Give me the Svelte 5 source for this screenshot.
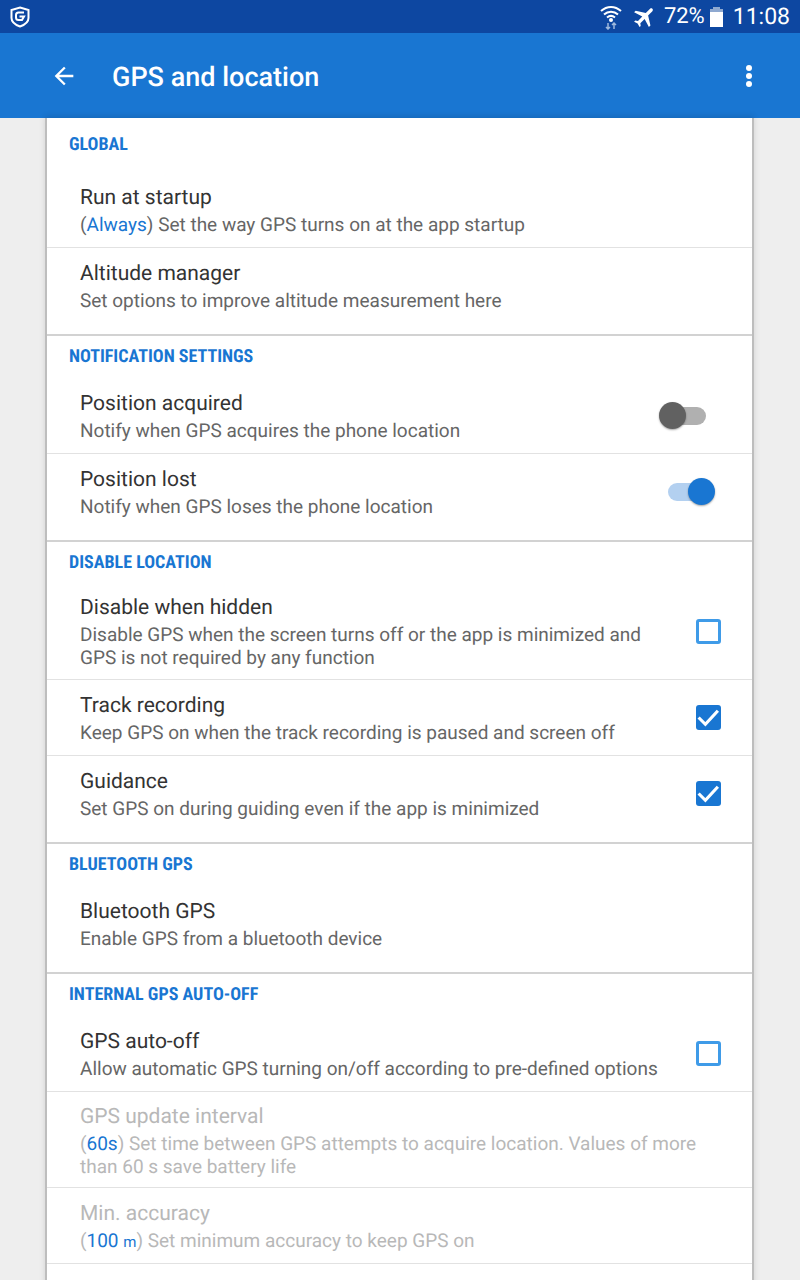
<script>
  const sections = [
    {
      title: 'GLOBAL',
      rows: [
        { title: 'Run at startup', value: 'Always', sub: 'Set the way GPS turns on at the app startup' },
        { title: 'Altitude manager', sub: 'Set options to improve altitude measurement here' }
      ]
    },
    {
      title: 'NOTIFICATION SETTINGS',
      rows: [
        { title: 'Position acquired', sub: 'Notify when GPS acquires the phone location', toggle: false },
        { title: 'Position lost', sub: 'Notify when GPS loses the phone location', toggle: true }
      ]
    },
    {
      title: 'DISABLE LOCATION',
      rows: [
        { title: 'Disable when hidden', sub: 'Disable GPS when the screen turns off or the app is minimized and GPS is not required by any function', check: false },
        { title: 'Track recording', sub: 'Keep GPS on when the track recording is paused and screen off', check: true },
        { title: 'Guidance', sub: 'Set GPS on during guiding even if the app is minimized', check: true }
      ]
    },
    {
      title: 'BLUETOOTH GPS',
      rows: [{ title: 'Bluetooth GPS', sub: 'Enable GPS from a bluetooth device' }]
    },
    {
      title: 'INTERNAL GPS AUTO-OFF',
      rows: [
        { title: 'GPS auto-off', sub: 'Allow automatic GPS turning on/off according to pre-defined options', check: false },
        { title: 'GPS update interval', value: '60s', sub: 'Set time between GPS attempts to acquire location. Values of more than 60 s save battery life', off: true },
        { title: 'Min. accuracy', value: '100', unit: 'm', sub: 'Set minimum accuracy to keep GPS on', off: true },
        { off: true }
      ]
    }
  ]
</script>

<div class="screen">
  <div class="status">
    <svg class="shield" viewBox="0 0 20 22" width="20" height="22">
      <path d="M10 1.500 18.500 4v8c0 4-3.600 6.800-8.500 8.500C5.100 18.800 1.500 16 1.500 12V4z" fill="none" stroke="#fff" stroke-width="2" />
      <path d="M14 6.500H8.500C7 6.500 6 7.500 6 9v2.500C6 13 7 14 8.500 14H12l2-3.500H9.500" fill="none" stroke="#fff" stroke-width="2" />
    </svg>
    <span class="spacer"></span>
    <svg class="wifi" viewBox="0 0 24 26" width="24" height="26">
      <g fill="none" stroke="#fff" stroke-width="2">
        <path d="M2 7C8 1.500 16 1.500 22 7" />
        <path d="M5 10.500C9 6.800 15 6.800 19 10.500" />
        <path d="M8 13.500C10.500 11.500 13.500 11.500 16 13.500" />
      </g>
      <circle cx="12" cy="16" r="2" fill="#fff" />
      <path d="M9 19v6M7 23l2 2 2-2M15 25v-6M13 21l2-2 2 2" fill="none" stroke="#9db8dc" stroke-width="1.500" />
    </svg>
    <svg class="plane" viewBox="2 2 20 20" width="22" height="22">
      <path transform="rotate(45 12 12)" d="M21 16v-2l-8-5V3.500c0-.83-.67-1.500-1.500-1.500S10 2.670 10 3.500V9l-8 5v2l8-2.500V19l-2 1.500V22l3.500-1 3.500 1v-1.500L13 19v-5.500l8 2.500z" fill="#fff" />
    </svg>
    <span class="pct">72%</span>
    <span class="battery"><span class="cap"></span><span class="empty"></span><span class="full"></span></span>
    <span class="clock">11:08</span>
  </div>

  <div class="toolbar">
    <svg class="back" viewBox="0 0 24 24" width="28" height="28">
      <path d="M20 11H7.830l5.590-5.590L12 4l-8 8 8 8 1.410-1.410L7.830 13H20v-2z" fill="#fff" />
    </svg>
    <span class="heading">GPS and location</span>
    <span class="spacer"></span>
    <span class="more"><i></i><i></i><i></i></span>
  </div>

  <div class="card">
    {#each sections as section}
      <section>
        <h2>{section.title}</h2>
        {#each section.rows as row}
          <div class="row" class:off={row.off}>
            {#if row.title}
              <div class="text" class:narrow={row.check !== undefined}>
                <div class="title">{row.title}</div>
                <div class="sub">
                  {#if row.value}(<span class="value">{row.value}{#if row.unit}{' '}<small>{row.unit}</small>{/if}</span>){' '}{/if}{row.sub}
                </div>
              </div>
            {/if}
            {#if row.toggle !== undefined}
              <span class="toggle" class:on={row.toggle}><span class="track"></span><span class="thumb"></span></span>
            {/if}
            {#if row.check !== undefined}
              <span class="check" class:on={row.check}>
                {#if row.check}
                  <svg viewBox="0 0 24 24" width="25" height="25">
                    <path d="M2.500 12l6.500 6.500L21 5.500" fill="none" stroke="#fff" stroke-width="3" />
                  </svg>
                {/if}
              </span>
            {/if}
          </div>
        {/each}
      </section>
    {/each}
  </div>
</div>

<style>
  :global(body) {
    background: #eeeeee;
  }
  .screen {
    height: 1280px;
    overflow: hidden;
    font-family: Roboto, sans-serif;
    text-rendering: geometricPrecision;
  }
  .status {
    height: 33px;
    background: #0d47a1;
    display: flex;
    align-items: center;
    padding: 0 10px;
    color: #fff;
  }
  .spacer {
    flex: 1;
  }
  .wifi {
    margin-right: 11px;
  }
  .plane {
    margin-right: 8px;
  }
  .pct {
    font-size: 22px;
    margin-right: 5px;
  }
  .battery {
    width: 13px;
    height: 20px;
    display: flex;
    flex-direction: column;
    align-items: center;
    margin-right: 10px;
  }
  .cap {
    width: 7px;
    height: 2px;
    background: #8fa9d0;
  }
  .empty {
    width: 13px;
    height: 3px;
    background: #8fa9d0;
  }
  .full {
    width: 13px;
    flex: 1;
    background: #fff;
  }
  .clock {
    font-size: 23px;
  }
  .toolbar {
    height: 85px;
    background: #1976d2;
    display: flex;
    align-items: center;
    padding: 0 48px 0 50px;
  }
  .heading {
    margin: 2px 0 0 34px;
    font-size: 27px;
    font-weight: 500;
    color: #fff;
  }
  .more {
    display: flex;
    flex-direction: column;
    gap: 2px;
  }
  .more i {
    width: 6px;
    height: 6px;
    border-radius: 50%;
    background: #fff;
  }
  .card {
    margin-left: 47px;
    width: 705px;
    background: #fff;
    box-shadow: -2px 0 0 #bdbdbd, 2px 0 0 #bdbdbd, 0 0 6px 2px rgba(0, 0, 0, 0.12);
  }
  section {
    padding-bottom: 10px;
    border-bottom: 2px solid #d2d2d2;
  }
  section:first-child {
    padding-top: 6px;
  }
  section:first-child h2 {
    margin-bottom: 6px;
  }
  h2 {
    margin: 0;
    height: 42px;
    line-height: 42px;
    padding-left: 22px;
    font-size: 18px;
    font-weight: 700;
    font-stretch: 75%;
    color: #1976d2;
    white-space: nowrap;
  }
  .row {
    display: flex;
    align-items: center;
    min-height: 76px;
    padding: 0 31px 0 33px;
    box-sizing: border-box;
    border-bottom: 1px solid #e2e2e2;
  }
  .row:last-child {
    border-bottom-color: transparent;
  }
  .text {
    flex: 1;
    padding: 9px 0 10px;
  }
  .off .text {
    padding: 10px 0 9px;
  }
  .text.narrow {
    padding-right: 20px;
  }
  .title {
    font-size: 21px;
    line-height: 30px;
    color: #333;
  }
  .sub {
    font-size: 19px;
    line-height: 23px;
    color: #666;
  }
  .value {
    color: #1976d2;
  }
  .value small {
    font-size: 15px;
  }
  .off .title,
  .off .sub {
    color: #b8b8b8;
  }
  .off .value {
    color: #1976d2;
  }
  .toggle {
    position: relative;
    width: 48px;
    height: 28px;
    margin-right: 14px;
    flex: none;
  }
  .toggle.on {
    margin-right: 6px;
  }
  .track {
    position: absolute;
    left: 1px;
    right: 1px;
    top: 5px;
    height: 18px;
    border-radius: 9px;
    background: #b0b0b0;
  }
  .thumb {
    position: absolute;
    left: 0;
    top: 0;
    width: 27px;
    height: 27px;
    border-radius: 50%;
    background: #616161;
    box-shadow: 0 1px 2px rgba(0, 0, 0, 0.35);
  }
  .toggle.on .track {
    background: #b3d0f0;
  }
  .toggle.on .thumb {
    left: auto;
    right: 0;
    background: #1976d2;
  }
  .check {
    width: 25px;
    height: 25px;
    box-sizing: border-box;
    border: 3px solid #3f9be8;
    border-radius: 3px;
    flex: none;
    display: flex;
    align-items: center;
    justify-content: center;
  }
  .check.on {
    background: #1976d2;
    border: 0;
  }
  .check svg {
    flex: none;
  }
</style>
